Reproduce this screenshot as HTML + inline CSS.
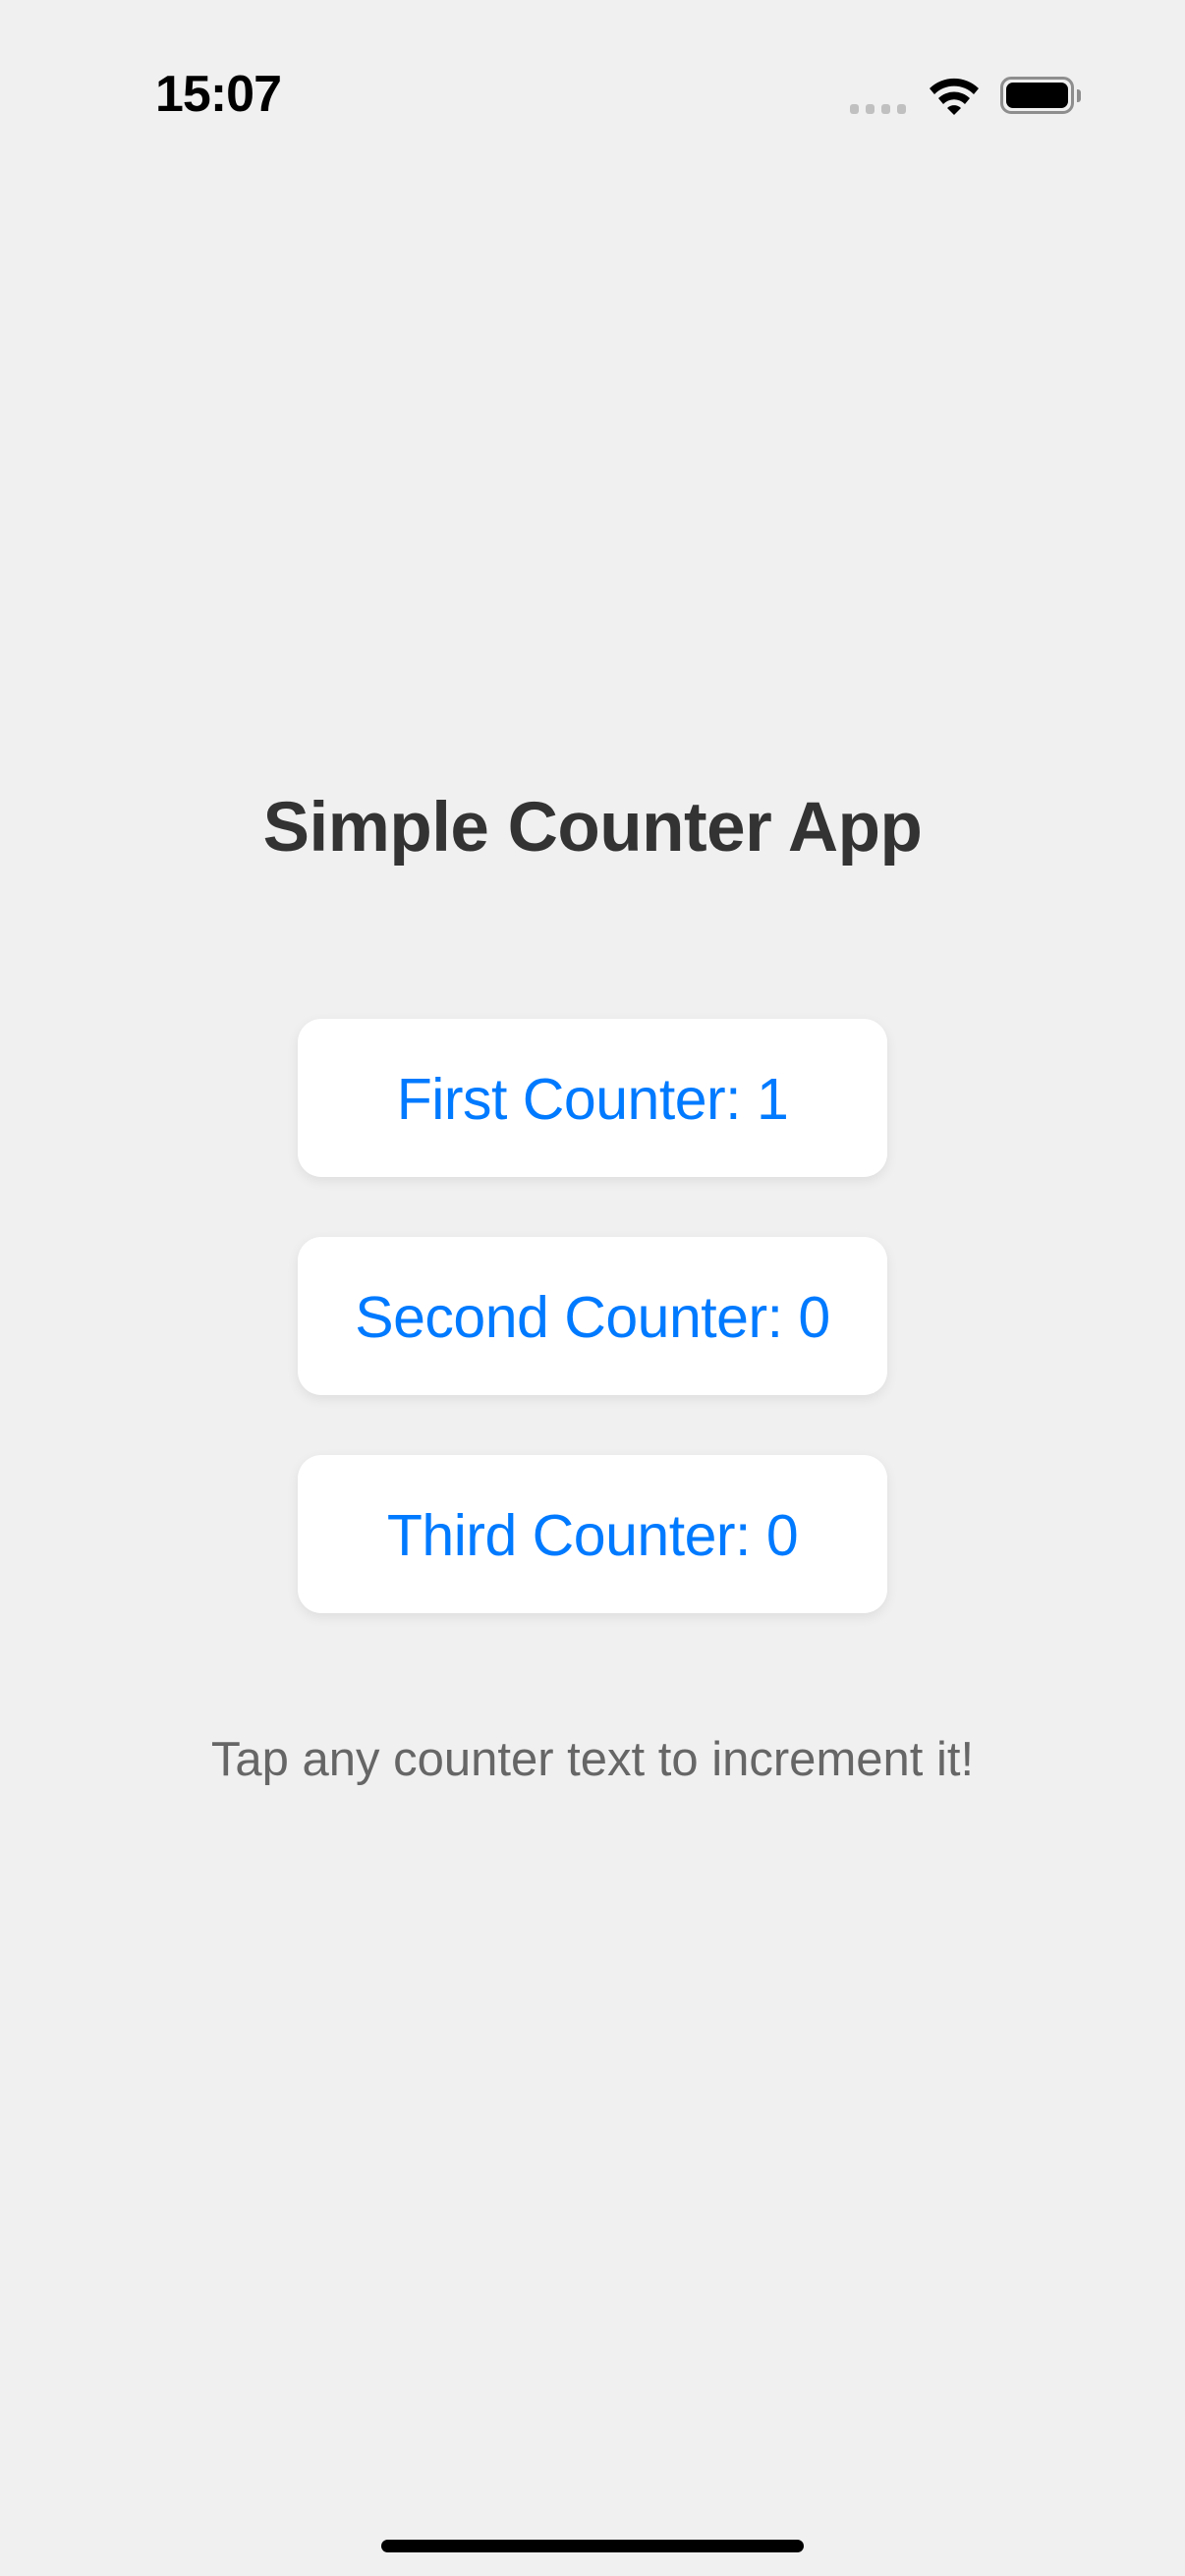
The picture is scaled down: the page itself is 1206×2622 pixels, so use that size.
<!DOCTYPE html>
<html><head><meta charset="utf-8"><style>
html,body{margin:0;padding:0;}
body{width:1206px;height:2622px;background:#f0f0f0;position:relative;overflow:hidden;font-family:"Liberation Sans",sans-serif;}
.abs{position:absolute;}
.time{left:158px;top:67px;font-size:52px;font-weight:bold;color:#000;line-height:58px;letter-spacing:-1px;}
.title{left:0;width:1206px;top:803px;text-align:center;font-size:71px;font-weight:bold;color:#333;line-height:80px;letter-spacing:-0.5px;}
.card{left:303px;width:600px;height:161px;background:#fff;border-radius:24px;box-shadow:0 4px 12px rgba(0,0,0,0.08);display:flex;align-items:center;justify-content:center;color:#007aff;font-size:59px;letter-spacing:-0.5px;padding-top:2px;box-sizing:border-box;}
.hint{left:0;width:1206px;top:1763px;text-align:center;font-size:49px;color:#666;line-height:56px;}
.home{left:388px;top:2585px;width:430px;height:13px;border-radius:7px;background:#000;}
</style></head><body>
<div class="abs time">15:07</div>
<div class="abs" style="left:865px;top:106px;width:9px;height:10px;border-radius:3px;background:#c0c0c0"></div>
<div class="abs" style="left:881px;top:106px;width:9px;height:10px;border-radius:3px;background:#c0c0c0"></div>
<div class="abs" style="left:897px;top:106px;width:9px;height:10px;border-radius:3px;background:#c0c0c0"></div>
<div class="abs" style="left:913px;top:106px;width:9px;height:10px;border-radius:3px;background:#c0c0c0"></div>
<svg class="abs" style="left:944px;top:76px" width="54" height="42" viewBox="0 0 54 42">
<path d="M2 14 A36 36 0 0 1 52 14 L47 20 A28 28 0 0 0 7 20 Z" fill="#000"/>
<path d="M11 24 A23 23 0 0 1 43 24 L38 30 A15 15 0 0 0 16 30 Z" fill="#000"/>
<path d="M20 34 A10 10 0 0 1 34 34 L27 41 Z" fill="#000"/>
</svg>
<div class="abs" style="left:1018px;top:78px;width:69px;height:32px;border:3px solid #8e8e8e;border-radius:11px;"></div>
<div class="abs" style="left:1024px;top:84px;width:63px;height:26px;background:#000;border-radius:7px;"></div>
<div class="abs" style="left:1096px;top:91px;width:4px;height:13px;background:#8e8e8e;border-radius:0 3px 3px 0;"></div>
<div class="abs title">Simple Counter App</div>
<div class="abs card" style="top:1037px">First Counter: 1</div>
<div class="abs card" style="top:1259px">Second Counter: 0</div>
<div class="abs card" style="top:1481px">Third Counter: 0</div>
<div class="abs hint">Tap any counter text to increment it!</div>
<div class="abs home"></div>
</body></html>
